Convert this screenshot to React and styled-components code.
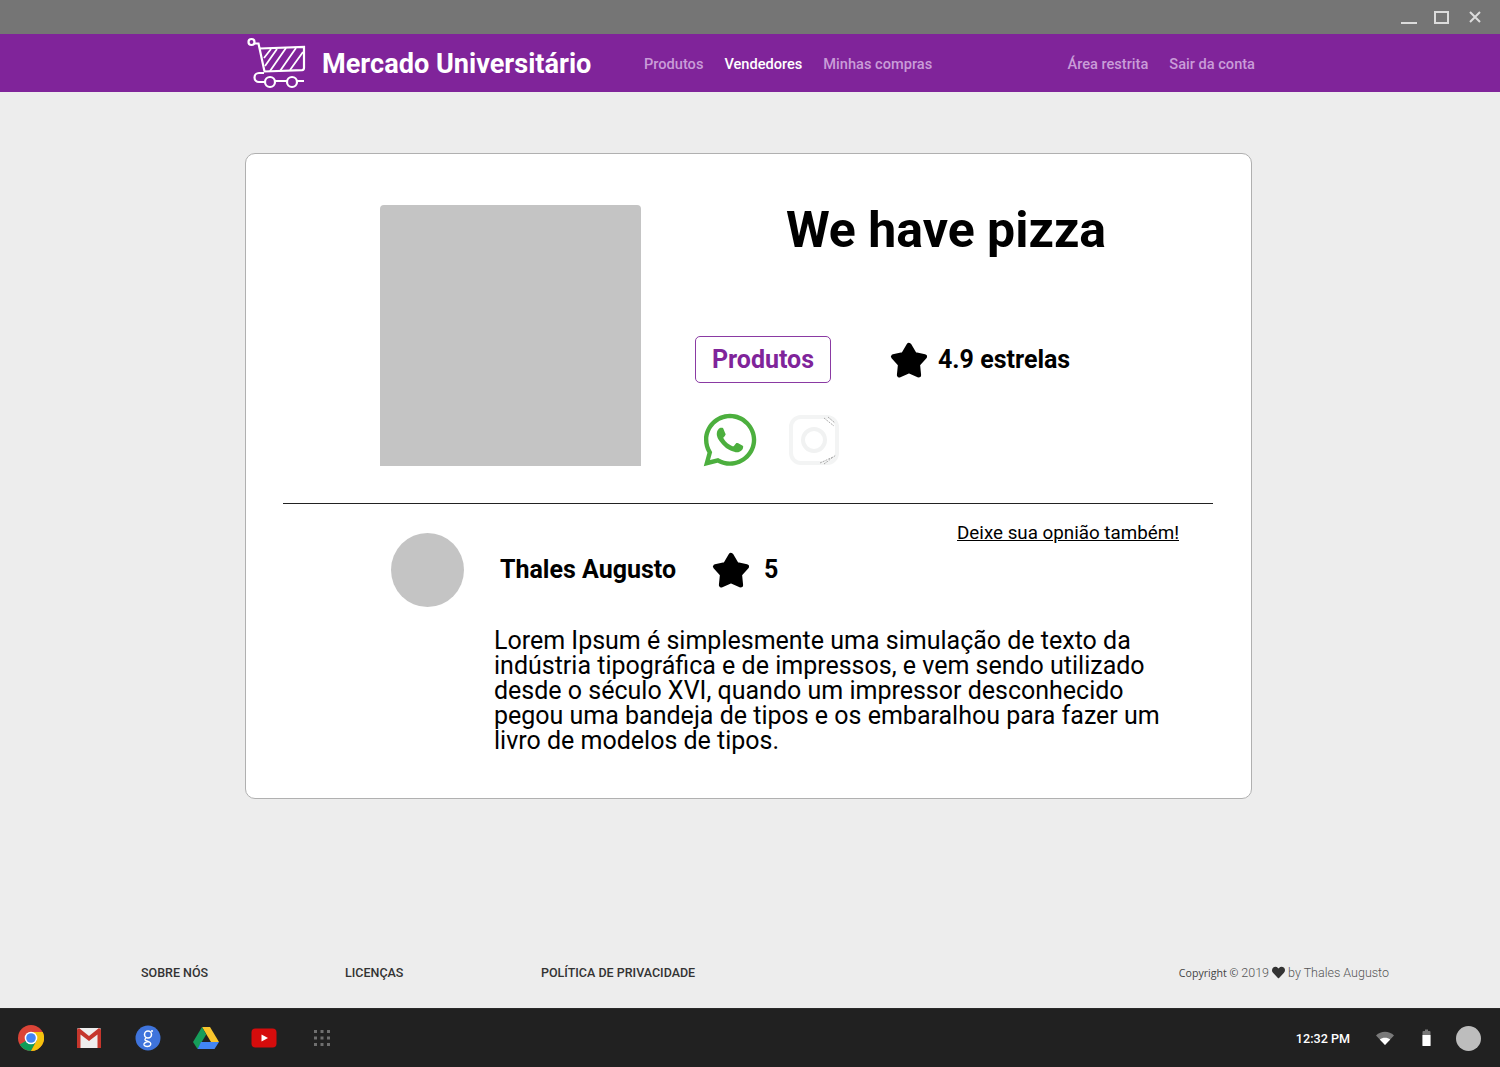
import React from "react";
import styled, { createGlobalStyle } from "styled-components";
import { FaWhatsapp, FaHeart } from "react-icons/fa";

const Global = createGlobalStyle`
  html, body { margin: 0; padding: 0; }
  body { font-family: Roboto, "Liberation Sans", sans-serif; background: #ededed; }
  * { box-sizing: border-box; }
`;

const Screen = styled.div`
  width: 1500px; height: 1067px; display: flex; flex-direction: column; overflow: hidden; background: #ededed;
`;
const TitleBar = styled.div`
  height: 34px; background: #757575; display: flex; align-items: center; justify-content: flex-end;
  padding: 0 17px 0 0; gap: 17px; flex: none;
`;
const WinIcon = styled.svg`
  width: 16px; height: 16px; display: block; fill: none; stroke: #dcdcdc; stroke-width: 2;
`;
const Header = styled.header`
  height: 58px; background: #80249a; display: flex; align-items: center; padding: 1px 245px 0 246px; flex: none;
`;
const Brand = styled.div`
  display: flex; align-items: center; gap: 16px; width: 398px; flex: none;
`;
const BrandName = styled.span`
  color: #fff; font-size: 27.1px; font-weight: 700; white-space: nowrap;
`;
const Nav = styled.nav`
  display: flex; gap: 21px; align-items: center;
  &:last-child { margin-left: auto; }
`;
const NavLink = styled.a`
  font-size: 14.6px; font-weight: 500; white-space: nowrap; color: ${p => (p.$active ? "#fff" : "#c99cd8")};
`;
const Main = styled.main`
  flex: 1; padding: 61px 0 0 245px;
`;
const Card = styled.section`
  width: 1007px; height: 646px; background: #fff; border: 1px solid #b0b0b0; border-radius: 10px;
`;
const Top = styled.div`
  display: flex; padding: 51px 0 0 134px; gap: 54px;
`;
const Photo = styled.div`
  width: 261px; height: 261px; background: #c4c4c4; border-radius: 4px 4px 0 0; flex: none;
`;
const Info = styled.div`
  width: 502px; display: flex; flex-direction: column;
`;
const Title = styled.h1`
  margin: 0; height: 131px; text-align: center; font-size: 50px; line-height: 50px; font-weight: 700; color: #000;
`;
const Actions = styled.div`
  display: flex; align-items: center; height: 47px;
`;
const ProductButton = styled.button`
  width: 136px; height: 47px; padding: 0; background: #fff; border: 1.5px solid #8a3aa3; border-radius: 5px;
  color: #80249a; font-family: Roboto, sans-serif; font-size: 25px; line-height: 44px; font-weight: 700;
`;
const StarIcon = styled.svg`
  width: ${p => p.$size}px; height: ${p => p.$size}px; display: block; flex: none;
  fill: #000; stroke: #000; stroke-width: 3; stroke-linejoin: round;
`;
const Rating = styled.div`
  display: flex; align-items: center; gap: 9px; margin-left: 58px;
  font-size: 25px; line-height: 44px; font-weight: 700; color: #000;
`;
const Socials = styled.div`
  display: flex; gap: 32px; margin-top: 31px; padding-left: 9px; align-items: center;
`;
const Whats = styled(FaWhatsapp)`
  width: 60px; height: 60px; margin: -4px; color: #4caf3e; display: block;
`;
const Insta = styled.svg`
  width: 52px; height: 52px; display: block; fill: none;
`;
const Divider = styled.hr`
  margin: 37px 0 0 37px; width: 930px; height: 1px; border: 0; background: #222;
`;
const ReviewHead = styled.div`
  display: flex; align-items: center; margin-top: 29px; padding: 0 72px 0 145px;
`;
const Avatar = styled.div`
  width: 73px; height: 74px; border-radius: 50%; background: #c4c4c4; flex: none;
`;
const ReviewName = styled.span`
  font-size: 25px; line-height: 28px; margin-top: -1px; font-weight: 700; margin-left: 36px; color: #000; white-space: nowrap;
`;
const ReviewStar = styled.span`
  margin-left: 35px; display: block;
`;
const Score = styled.span`
  font-size: 25px; line-height: 28px; margin-top: -1px; font-weight: 700; margin-left: 13px; color: #000;
`;
const ReviewLink = styled.a`
  margin-left: auto; align-self: flex-start; margin-top: -12px; font-size: 18.8px; line-height: 24px; color: #000; text-decoration: underline; white-space: nowrap;
`;
const ReviewBody = styled.p`
  margin: 21px 0 0 248px; width: 690px; font-size: 25px; line-height: 25px; color: #000;
`;
const Footer = styled.footer`
  height: 39px; display: flex; align-items: center; padding: 0 111px 0 141px; color: #333; flex: none;
`;
const FootLink = styled.a`
  font-weight: 500; font-size: 12.5px; white-space: nowrap; width: ${p => p.$w}px; flex: none;
`;
const Copy = styled.div`
  margin-left: auto; display: flex; align-items: center; gap: 3px; color: #555; font-size: 12.5px; font-weight: 300; white-space: nowrap;
`;
const CopyStrong = styled.span`
  font-size: 10.6px; font-family: "Open Sans", sans-serif; font-weight: 400; color: #444;
`;
const Heart = styled(FaHeart)`
  width: 13px; height: 13px; color: #333;
`;
const Footnote = styled.div`
  height: 16px; flex: none;
`;
const Shelf = styled.div`
  height: 59px; background: #212121; flex: none; display: flex; align-items: center; padding: 0 19px 0 18px;
  border-top: 1px solid #2a2a2a;
`;
const ShelfApps = styled.div`
  display: flex; gap: 32.3px; align-items: center;
`;
const ShelfIcon = styled.svg`
  width: 26px; height: 26px; display: block; flex: none;
`;
const Tray = styled.div`
  margin-left: auto; display: flex; align-items: center;
`;
const Clock = styled.span`
  color: #fff; font-size: 12.6px; font-weight: 500; margin-right: 26px;
`;
const TrayIcon = styled.svg`
  display: block; width: ${p => p.$w}px; height: 18px; margin-right: ${p => p.$gap}px;
`;
const User = styled.div`
  width: 25px; height: 25px; border-radius: 50%; background: #bdbdbd;
`;

const Star = ({ size }) => (
  <StarIcon $size={size} viewBox="0 0 24 24">
    <path d="M12 3.2L15.17 8.63 21.32 9.97 17.14 14.67 17.76 20.93 12 18.4 6.24 20.93 6.86 14.67 2.68 9.97 8.83 8.63Z" />
  </StarIcon>
);

const Cart = () => (
  <svg width="60" height="52" viewBox="0 0 60 52" fill="none" stroke="#fff" strokeWidth="2.2" style={{ display: "block", flex: "none", marginTop: -1 }}>
    <circle cx="5.5" cy="5" r="3" />
    <path d="M8.5 6.5h4l6 28" />
    <path d="M14 11.5l44-1.500v21q0 2-2 2.200L18 34.500" />
    <path d="M19 29L31 12M24 34L40 11M34 34L50 11M44 33L57 15M18 21l7-9" strokeWidth="1.8" />
    <path d="M18 36h-5a4.500 4.500 0 0 0 0 9h6M29 44h12M51 44h7" />
    <circle cx="24" cy="45" r="5" />
    <circle cx="46" cy="45" r="5" />
  </svg>
);

export default function App() {
  return (
    <Screen>
      <Global />
      <TitleBar>
        <WinIcon viewBox="0 0 16 16"><path d="M0 14h16" /></WinIcon>
        <WinIcon viewBox="0 0 16 16"><path d="M1 3h13v11H1z" /></WinIcon>
        <WinIcon viewBox="0 0 16 16"><path d="M3 3l10 10M13 3L3 13" /></WinIcon>
      </TitleBar>
      <Header>
        <Brand>
          <Cart />
          <BrandName>Mercado Universitário</BrandName>
        </Brand>
        <Nav>
          <NavLink>Produtos</NavLink>
          <NavLink $active>Vendedores</NavLink>
          <NavLink>Minhas compras</NavLink>
        </Nav>
        <Nav>
          <NavLink>Área restrita</NavLink>
          <NavLink>Sair da conta</NavLink>
        </Nav>
      </Header>
      <Main>
        <Card>
          <Top>
            <Photo />
            <Info>
              <Title>We have pizza</Title>
              <Actions>
                <ProductButton>Produtos</ProductButton>
                <Rating>
                  <Star size={40} />
                  4.9 estrelas
                </Rating>
              </Actions>
              <Socials>
                <Whats />
                <Insta viewBox="0 0 52 52">
                  <rect x="3" y="3" width="46" height="46" rx="10" stroke="#f3f4f4" strokeWidth="4" />
                  <circle cx="26" cy="26" r="11" stroke="#f1f2f2" strokeWidth="4" />
                  <path d="M36 4l10 8M40 3l7 6M32 49l13-6M36 50l12-9" stroke="#aaa" strokeWidth="1" strokeDasharray="2 1" />
                </Insta>
              </Socials>
            </Info>
          </Top>
          <Divider />
          <ReviewHead>
            <Avatar />
            <ReviewName>Thales Augusto</ReviewName>
            <ReviewStar><Star size={40} /></ReviewStar>
            <Score>5</Score>
            <ReviewLink>Deixe sua opnião também!</ReviewLink>
          </ReviewHead>
          <ReviewBody>
            Lorem Ipsum é simplesmente uma simulação de texto da indústria tipográfica e de impressos, e vem sendo utilizado desde o século XVI, quando um impressor desconhecido pegou uma bandeja de tipos e os embaralhou para fazer um livro de modelos de tipos.
          </ReviewBody>
        </Card>
      </Main>
      <Footer>
        <FootLink $w={204}>SOBRE NÓS</FootLink>
        <FootLink $w={196}>LICENÇAS</FootLink>
        <FootLink $w={170}>POLÍTICA DE PRIVACIDADE</FootLink>
        <Copy>
          <CopyStrong>Copyright ©</CopyStrong> 2019 <Heart /> by Thales Augusto
        </Copy>
      </Footer>
      <Footnote />
      <Shelf>
        <ShelfApps>
          <ShelfIcon viewBox="0 0 26 26">
            <circle cx="13" cy="13" r="13" fill="#db4437" />
            <path d="M13 13L1.7 19.5A13 13 0 0 0 13 26l6-11z" fill="#0f9d58" />
            <path d="M13 7h11.7A13 13 0 0 1 13 26l6-11z" fill="#f4c20d" />
            <circle cx="13" cy="13" r="6.3" fill="#fff" />
            <circle cx="13" cy="13" r="4.8" fill="#4285f4" />
          </ShelfIcon>
          <ShelfIcon viewBox="0 0 26 26">
            <rect x="1" y="3" width="24" height="20" rx="1.5" fill="#eeeeee" />
            <path d="M1 4.5V23h3.5V9.5L13 16l8.500-6.500V23H25V4.500L23 3l-10 8L3 3z" fill="#c5362c" />
          </ShelfIcon>
          <ShelfIcon viewBox="0 0 26 26">
            <circle cx="13" cy="13" r="12.500" fill="#3f74dc" />
            <circle cx="13" cy="9.500" r="3.500" fill="none" stroke="#fff" strokeWidth="1.500" />
            <path d="M11 13c-2 1.500-1 2.500 1 3 3 1 4.500 2 3.500 4s-5.500 2-6.500 0c-.5-2 2-3 4-3.500M16 6h2" fill="none" stroke="#fff" strokeWidth="1.400" />
          </ShelfIcon>
          <ShelfIcon viewBox="0 0 26 26">
            <path d="M9 2h8l9 15h-8z" fill="#f8c52c" />
            <path d="M9 2l4.200 7.500L4.500 24 0 17z" fill="#169d5a" />
            <path d="M8 17h18l-4.500 7h-17z" fill="#4285f4" />
          </ShelfIcon>
          <ShelfIcon viewBox="0 0 26 26">
            <rect x="0.500" y="3.500" width="25" height="19" rx="4" fill="#d50c0c" />
            <path d="M10.500 9.500l6.500 3.500-6.500 3.500z" fill="#fff" />
          </ShelfIcon>
          <ShelfIcon viewBox="0 0 26 26" fill="#6f6f6f">
            <path d="M5 5h3v3H5zM11.500 5h3v3h-3zM18 5h3v3h-3zM5 11.500h3v3H5zM11.500 11.500h3v3h-3zM18 11.500h3v3h-3zM5 18h3v3H5zM11.500 18h3v3h-3zM18 18h3v3h-3z" />
          </ShelfIcon>
        </ShelfApps>
        <Tray>
          <Clock>12:32 PM</Clock>
          <TrayIcon $w={18} $gap={28} viewBox="0 0 18 18">
            <path d="M0 6.500C5 1.500 13 1.500 18 6.500L9 16z" fill="#7a7a7a" />
            <path d="M3.800 10.500C6.500 8 11.500 8 14.200 10.500L9 16z" fill="#fff" />
          </TrayIcon>
          <TrayIcon $w={9} $gap={25} viewBox="0 0 9 18">
            <rect x="0.500" y="2" width="8" height="15" rx="1" fill="#777" />
            <path d="M3 0.500h3V2H3z" fill="#777" />
            <rect x="0.500" y="6" width="8" height="11" fill="#fff" />
          </TrayIcon>
          <User />
        </Tray>
      </Shelf>
    </Screen>
  );
}
